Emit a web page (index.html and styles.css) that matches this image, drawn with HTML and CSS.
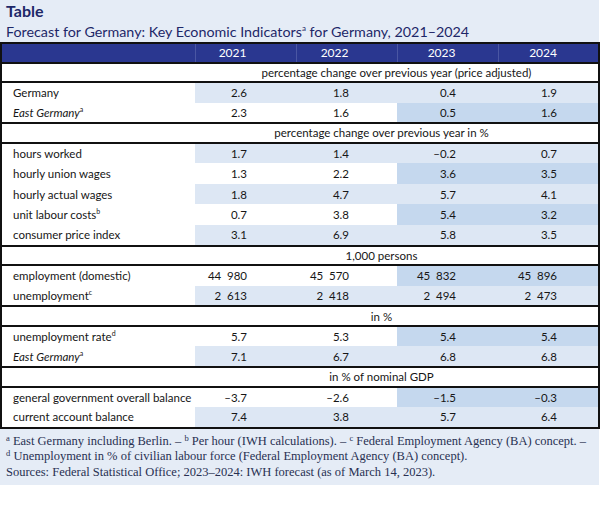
FILE: index.html
```html
<!DOCTYPE html>
<html lang="en">
<head>
<meta charset="utf-8">
<title>Forecast for Germany</title>
<link rel="stylesheet" href="styles.css">
</head>
<body>
<div class="panel">
  <div class="title">Table</div>
  <div class="subtitle">Forecast for Germany: Key Economic Indicators<sup class="tsup">a</sup> for Germany, 2021–2024</div>
  <table class="data">
    <colgroup>
      <col class="c-lbl"><col class="c-yr"><col class="c-yr"><col class="c-yr"><col class="c-yr">
    </colgroup>
    <thead>
      <tr class="head"><th class="lbl"></th><th class="y1">2021</th><th class="y2">2022</th><th class="y3">2023</th><th class="y4">2024</th></tr>
    </thead>
    <tbody>
      <tr class="sec"><td class="lbl"></td><td colspan="4" class="sectxt wide">percentage change over previous year (price adjusted)</td></tr>
      <tr class="row alt"><td class="lbl">Germany</td><td class="y1">2.6</td><td class="y2">1.8</td><td class="y3">0.4</td><td class="y4">1.9</td></tr>
      <tr class="row"><td class="lbl"><em>East Germany</em><sup>a</sup></td><td class="y1">2.3</td><td class="y2">1.6</td><td class="y3">0.5</td><td class="y4">1.6</td></tr>

      <tr class="sec"><td class="lbl"></td><td colspan="4" class="sectxt">percentage change over previous year in %</td></tr>
      <tr class="row alt"><td class="lbl">hours worked</td><td class="y1">1.7</td><td class="y2">1.4</td><td class="y3">–0.2</td><td class="y4">0.7</td></tr>
      <tr class="row"><td class="lbl">hourly union wages</td><td class="y1">1.3</td><td class="y2">2.2</td><td class="y3">3.6</td><td class="y4">3.5</td></tr>
      <tr class="row alt"><td class="lbl">hourly actual wages</td><td class="y1">1.8</td><td class="y2">4.7</td><td class="y3">5.7</td><td class="y4">4.1</td></tr>
      <tr class="row"><td class="lbl">unit labour costs<sup>b</sup></td><td class="y1">0.7</td><td class="y2">3.8</td><td class="y3">5.4</td><td class="y4">3.2</td></tr>
      <tr class="row alt"><td class="lbl">consumer price index</td><td class="y1">3.1</td><td class="y2">6.9</td><td class="y3">5.8</td><td class="y4">3.5</td></tr>

      <tr class="sec"><td class="lbl"></td><td colspan="4" class="sectxt">1,000 persons</td></tr>
      <tr class="row"><td class="lbl">employment (domestic)</td><td class="y1">44&ensp;980</td><td class="y2">45&ensp;570</td><td class="y3">45&ensp;832</td><td class="y4">45&ensp;896</td></tr>
      <tr class="row alt"><td class="lbl">unemployment<sup>c</sup></td><td class="y1">2&ensp;613</td><td class="y2">2&ensp;418</td><td class="y3">2&ensp;494</td><td class="y4">2&ensp;473</td></tr>

      <tr class="sec"><td class="lbl"></td><td colspan="4" class="sectxt">in %</td></tr>
      <tr class="row"><td class="lbl">unemployment rate<sup>d</sup></td><td class="y1">5.7</td><td class="y2">5.3</td><td class="y3">5.4</td><td class="y4">5.4</td></tr>
      <tr class="row alt"><td class="lbl"><em>East Germany</em><sup>a</sup></td><td class="y1">7.1</td><td class="y2">6.7</td><td class="y3">6.8</td><td class="y4">6.8</td></tr>

      <tr class="sec"><td class="lbl"></td><td colspan="4" class="sectxt">in % of nominal GDP</td></tr>
      <tr class="row"><td class="lbl">general government overall balance</td><td class="y1">–3.7</td><td class="y2">–2.6</td><td class="y3">–1.5</td><td class="y4">–0.3</td></tr>
      <tr class="row alt"><td class="lbl">current account balance</td><td class="y1">7.4</td><td class="y2">3.8</td><td class="y3">5.7</td><td class="y4">6.4</td></tr>
    </tbody>
  </table>
  <div class="notes">
    <p class="note"><sup>a</sup> East Germany including Berlin. – <sup>b</sup> Per hour (IWH calculations). – <sup>c</sup> Federal Employment Agency (BA) concept. –</p>
    <p class="note"><sup>d</sup> Unemployment in % of civilian labour force (Federal Employment Agency (BA) concept).</p>
    <p class="note">Sources: Federal Statistical Office; 2023–2024: IWH forecast (as of March 14, 2023).</p>
  </div>
</div>
</body>
</html>
```

FILE: styles.css
```css
* { box-sizing: border-box; }

body {
  margin: 0;
  background: #ffffff;
  font-family: "Lato", "Open Sans", sans-serif;
}

.panel {
  width: 599px;
  background: #e5ecf6;
}

.title {
  font-weight: 700;
  font-size: 16px;
  line-height: 18px;
  color: #1d2768;
  padding: 2px 0 0 6px;
}

.subtitle {
  font-size: 14.3px;
  line-height: 18px;
  color: #1d2768;
  padding: 3px 0 0 6px;
  margin-bottom: 1px;
}

.tsup {
  font-size: 8px;
  vertical-align: 6px;
  line-height: 0;
}

.data {
  border-collapse: collapse;
  width: 598px;
  table-layout: fixed;
  border: 2px solid #111111;
  background: #ffffff;
  font-size: 11.5px;
  color: #161616;
}

.c-lbl { width: 194px; }
.c-yr { width: 101px; }

.data th,
.data td {
  padding: 0;
  white-space: nowrap;
}

.head th {
  background: #2a3790;
  color: #ffffff;
  font-weight: 400;
  font-size: 12px;
  height: 19.5px;
  text-align: right;
  border-left: 1px solid #4a56a3;
}

.head th.lbl { border-left: none; }

.sec td {
  height: 19.5px;
  border-top: 2px solid #111111;
  border-bottom: 2px solid #111111;
  background: #ffffff;
}

.sectxt {
  text-align: center;
  padding-right: 30px !important;
}

.sectxt.wide { padding-right: 0 !important; }

.row td {
  height: 20.6px;
  text-align: right;
  background: #ffffff;
}

.row td.lbl {
  text-align: left;
  padding-left: 11px;
  background: #ffffff;
}

.row.alt td {
  background: #dde7f4;
}

.row.alt td.lbl { background: #ffffff; }

.row td.y3,
.row td.y4 {
  background: #c5d8ee;
}

.row.alt td.y3,
.row.alt td.y4 {
  background: #dde7f4;
}

.data .y1 { padding-right: 49px; }
.data .y2 { padding-right: 48px; }
.data .y3 { padding-right: 42px; }
.data .y4 { padding-right: 41px; }

.data sup {
  font-size: 7px;
  vertical-align: 5px;
  line-height: 0;
}

.notes {
  padding: 5px 6px 5px 6px;
  font-family: "Liberation Serif", "Times New Roman", serif;
  font-size: 12.5px;
  line-height: 15.5px;
  color: #283052;
}

.note { margin: 0; white-space: nowrap; }

.note sup {
  font-size: 8.5px;
  vertical-align: 4px;
  line-height: 0;
}
```
